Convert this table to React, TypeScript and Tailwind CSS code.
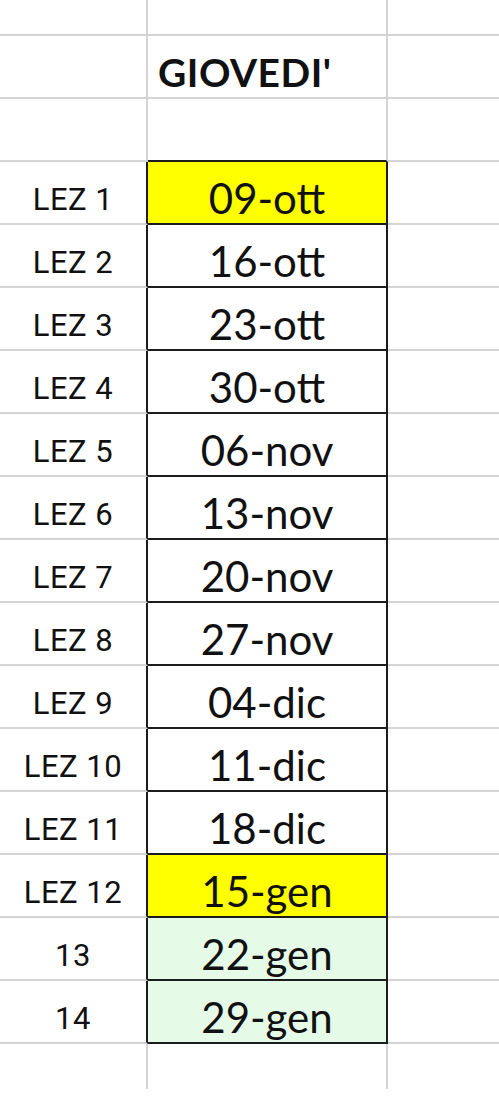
import React from 'react';

type Lesson = { label: string; date: string; fill?: 'yellow' | 'green' };

const lessons: Lesson[] = [
  { label: 'LEZ 1', date: '09-ott', fill: 'yellow' },
  { label: 'LEZ 2', date: '16-ott' },
  { label: 'LEZ 3', date: '23-ott' },
  { label: 'LEZ 4', date: '30-ott' },
  { label: 'LEZ 5', date: '06-nov' },
  { label: 'LEZ 6', date: '13-nov' },
  { label: 'LEZ 7', date: '20-nov' },
  { label: 'LEZ 8', date: '27-nov' },
  { label: 'LEZ 9', date: '04-dic' },
  { label: 'LEZ 10', date: '11-dic' },
  { label: 'LEZ 11', date: '18-dic' },
  { label: 'LEZ 12', date: '15-gen', fill: 'yellow' },
  { label: '13', date: '22-gen', fill: 'green' },
  { label: '14', date: '29-gen', fill: 'green' },
];

const labelFont = { fontFamily: 'Roboto, "DejaVu Sans", sans-serif' };
const dateFont = { fontFamily: 'Lato, "Open Sans", sans-serif' };

export default function App() {
  return (
    <div className="w-[499px] min-h-[1106px] bg-white text-[#111]">
      {/* empty top row */}
      <div className="grid grid-cols-[148px_240px_111px] h-[36px]">
        <div className="border-r-2 border-b-2 border-[#d4d4d4]" />
        <div className="border-r-2 border-b-2 border-[#d4d4d4]" />
        <div className="border-b-2 border-[#d4d4d4]" />
      </div>

      {/* header row */}
      <div className="grid grid-cols-[148px_240px_111px] h-[63px]">
        <div className="border-r-2 border-b-2 border-[#d4d4d4]" />
        <div className="border-r-2 border-b-2 border-[#d4d4d4] flex items-center pl-[10px] pt-[12px]">
          <span className="text-[39px] font-bold leading-none tracking-[0.5px]" style={dateFont}>
            GIOVEDI'
          </span>
        </div>
        <div className="border-b-2 border-[#d4d4d4]" />
      </div>

      {/* spacer row */}
      <div className="grid grid-cols-[148px_240px_111px] h-[63px]">
        <div className="border-r-2 border-b-2 border-[#d4d4d4]" />
        <div className="border-r-2 border-[#d4d4d4] border-b-2 border-b-[#1c1c1c]" />
        <div className="border-b-2 border-[#d4d4d4]" />
      </div>

      {lessons.map((l) => (
        <div key={l.label} className="grid grid-cols-[148px_240px_111px] h-[63px]">
          <div className="border-b-2 border-b-[#d4d4d4] border-r-2 border-r-[#1c1c1c] flex items-center justify-center pt-[13px]">
            <span className="text-[31px] leading-none tracking-[0.5px]" style={labelFont}>
              {l.label}
            </span>
          </div>
          <div
            className={
              'border-r-2 border-b-2 border-[#1c1c1c] flex items-center justify-center pt-[10px] ' +
              (l.fill === 'yellow' ? 'bg-[#ffff00]' : l.fill === 'green' ? 'bg-[#e5fbe8]' : 'bg-white')
            }
          >
            <span className="text-[42px] leading-none" style={dateFont}>
              {l.date}
            </span>
          </div>
          <div className="border-b-2 border-[#d4d4d4]" />
        </div>
      ))}

      {/* trailing partial row */}
      <div className="grid grid-cols-[148px_240px_111px] h-[45px]">
        <div className="border-r-2 border-[#d4d4d4]" />
        <div className="border-r-2 border-[#d4d4d4]" />
        <div />
      </div>
    </div>
  );
}
